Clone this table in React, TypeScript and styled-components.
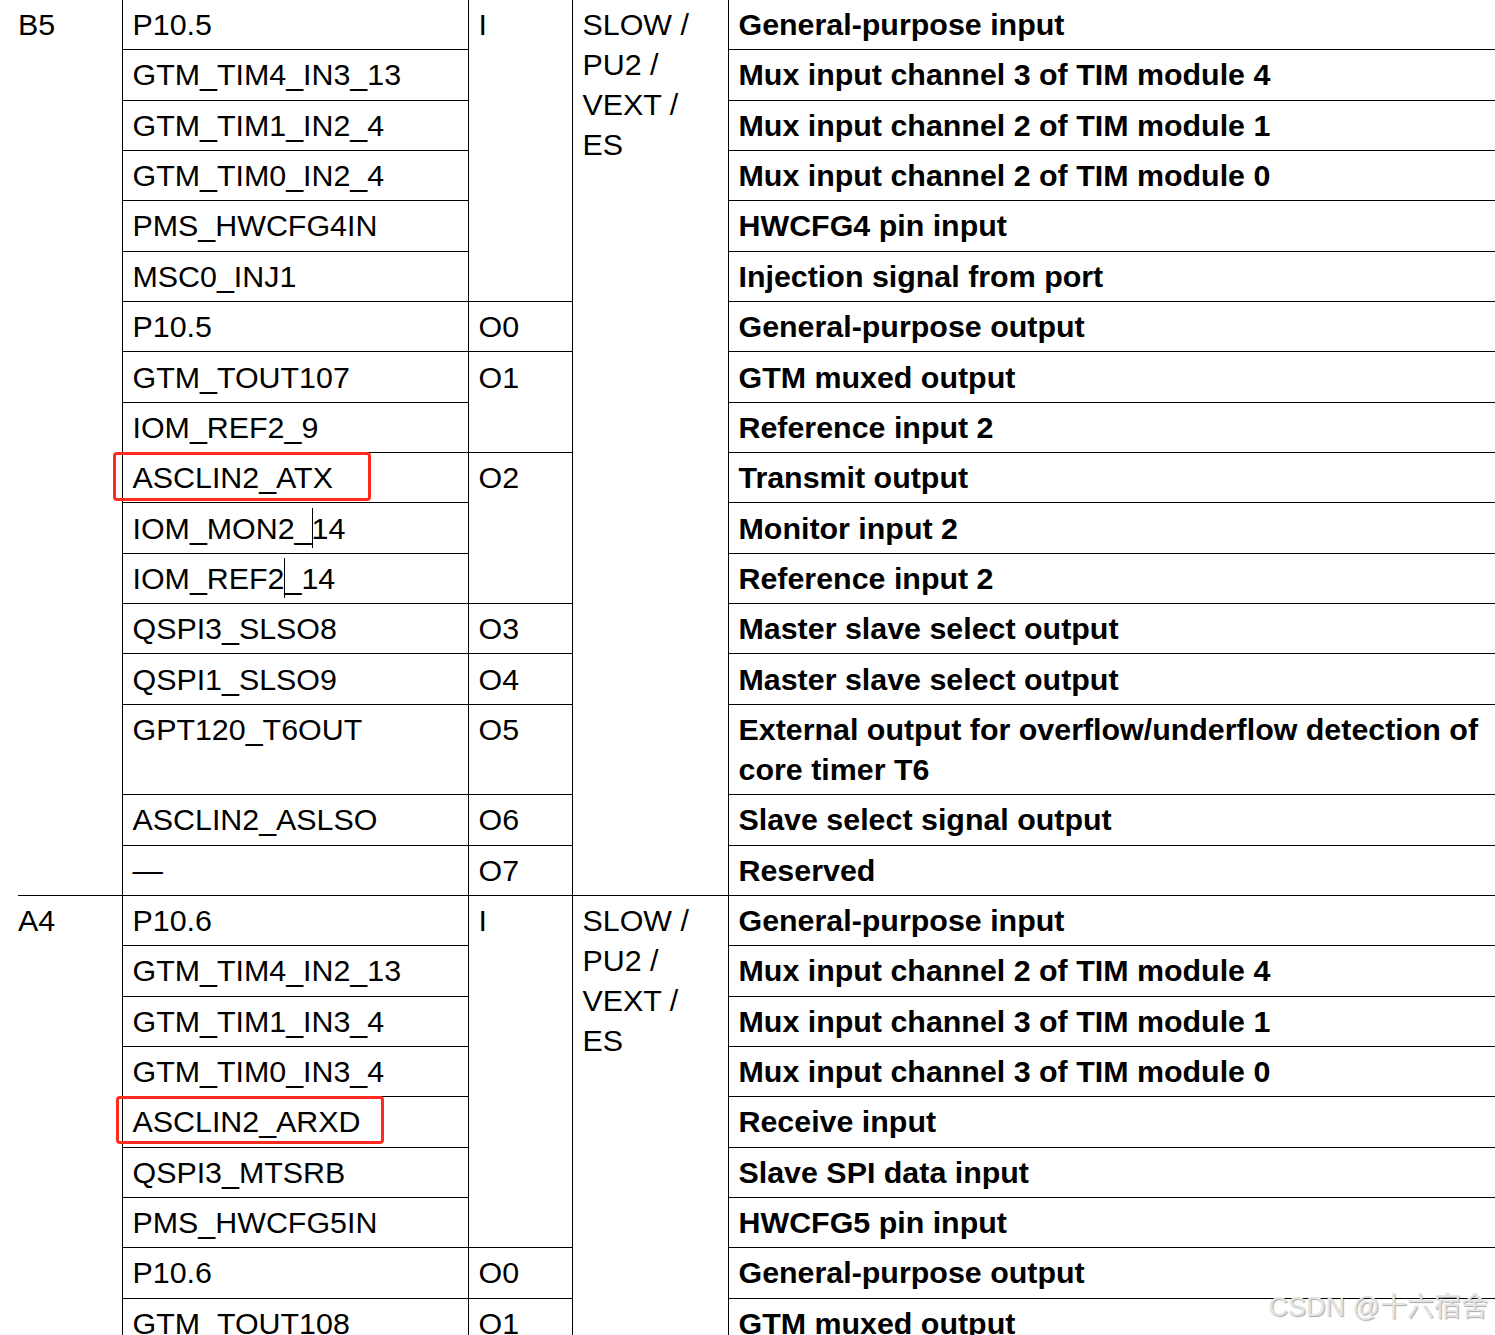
import React from "react";
import styled, { createGlobalStyle } from "styled-components";

const GlobalStyle = createGlobalStyle`
  html, body {
    margin: 0;
    padding: 0;
    background: #fff;
    overflow: hidden;
  }
`;

const Page = styled.div`
  position: relative;
  width: 1495px;
  height: 1335px;
  overflow: hidden;
  font-family: "Liberation Sans", Arial, sans-serif;
  color: #000;
`;

const Table = styled.table`
  margin: 0 0 0 18px;
  width: 1477px;
  table-layout: fixed;
  border-collapse: collapse;
  font-size: 30.4px;
  line-height: 40px;
`;

const Cell = styled.td`
  position: relative;
  vertical-align: top;
  padding: 4.1px 10px 5.26px;
  border-bottom: 1px solid #000;
  border-right: 1px solid #000;
`;

const BallCell = styled(Cell)`
  padding-left: 0;
`;

const DescCell = styled(Cell)`
  font-weight: bold;
  padding-right: 0;
  border-right: none;
`;

const Caret = styled.span`
  display: inline-block;
  width: 0;
  height: 40px;
  margin-right: -1px;
  border-left: 1px solid #000;
  vertical-align: top;
`;

const Mark = styled.span<{ $left: number; $top: number; $w: number; $h: number }>`
  position: absolute;
  left: ${(p) => p.$left}px;
  top: ${(p) => p.$top}px;
  width: ${(p) => p.$w}px;
  height: ${(p) => p.$h}px;
  box-sizing: border-box;
  border: 3px solid #ff2b1f;
  border-radius: 4px;
  pointer-events: none;
`;

const Watermark = styled.div`
  position: absolute;
  right: 7px;
  top: 1290px;
  font-family: "Liberation Sans", "Noto Sans CJK SC", sans-serif;
  font-size: 27px;
  line-height: 34px;
  color: #e4e4e4;
  text-shadow: 1px 1px 1px rgba(0, 0, 0, 0.35);
  white-space: nowrap;
`;

type Signal = {
  name: string;
  desc: string;
  ctrl?: string;
  span?: number;
  caretAt?: number;
  mark?: { left: number; top: number; w: number; h: number };
};

type Group = { ball: string; type: string; signals: Signal[] };

const groups: Group[] = [
  {
    ball: "B5",
    type: "SLOW / PU2 / VEXT / ES",
    signals: [
      { name: "P10.5", ctrl: "I", span: 6, desc: "General-purpose input" },
      { name: "GTM_TIM4_IN3_13", desc: "Mux input channel 3 of TIM module 4" },
      { name: "GTM_TIM1_IN2_4", desc: "Mux input channel 2 of TIM module 1" },
      { name: "GTM_TIM0_IN2_4", desc: "Mux input channel 2 of TIM module 0" },
      { name: "PMS_HWCFG4IN", desc: "HWCFG4 pin input" },
      { name: "MSC0_INJ1", desc: "Injection signal from port" },
      { name: "P10.5", ctrl: "O0", desc: "General-purpose output" },
      { name: "GTM_TOUT107", ctrl: "O1", span: 2, desc: "GTM muxed output" },
      { name: "IOM_REF2_9", desc: "Reference input 2" },
      {
        name: "ASCLIN2_ATX",
        ctrl: "O2",
        span: 3,
        desc: "Transmit output",
        mark: { left: -10, top: -1, w: 258, h: 49 },
      },
      { name: "IOM_MON2_14", caretAt: 9, desc: "Monitor input 2" },
      { name: "IOM_REF2_14", caretAt: 8, desc: "Reference input 2" },
      { name: "QSPI3_SLSO8", ctrl: "O3", desc: "Master slave select output" },
      { name: "QSPI1_SLSO9", ctrl: "O4", desc: "Master slave select output" },
      {
        name: "GPT120_T6OUT",
        ctrl: "O5",
        desc: "External output for overflow/underflow detection of core timer T6",
      },
      { name: "ASCLIN2_ASLSO", ctrl: "O6", desc: "Slave select signal output" },
      { name: "\u2014", ctrl: "O7", desc: "Reserved" },
    ],
  },
  {
    ball: "A4",
    type: "SLOW / PU2 / VEXT / ES",
    signals: [
      { name: "P10.6", ctrl: "I", span: 7, desc: "General-purpose input" },
      { name: "GTM_TIM4_IN2_13", desc: "Mux input channel 2 of TIM module 4" },
      { name: "GTM_TIM1_IN3_4", desc: "Mux input channel 3 of TIM module 1" },
      { name: "GTM_TIM0_IN3_4", desc: "Mux input channel 3 of TIM module 0" },
      {
        name: "ASCLIN2_ARXD",
        desc: "Receive input",
        mark: { left: -7, top: -1, w: 268, h: 48 },
      },
      { name: "QSPI3_MTSRB", desc: "Slave SPI data input" },
      { name: "PMS_HWCFG5IN", desc: "HWCFG5 pin input" },
      { name: "P10.6", ctrl: "O0", desc: "General-purpose output" },
      { name: "GTM_TOUT108", ctrl: "O1", desc: "GTM muxed output" },
    ],
  },
];

const SignalName: React.FC<{ s: Signal }> = ({ s }) =>
  s.caretAt === undefined ? (
    <>{s.name}</>
  ) : (
    <>
      {s.name.slice(0, s.caretAt)}
      <Caret />
      {s.name.slice(s.caretAt)}
    </>
  );

export default function App() {
  return (
    <Page>
      <GlobalStyle />
      <Table>
        <colgroup>
          <col style={{ width: 104 }} />
          <col style={{ width: 346 }} />
          <col style={{ width: 104 }} />
          <col style={{ width: 156 }} />
          <col />
        </colgroup>
        <tbody>
          {groups.map((g) =>
            g.signals.map((s, i) => (
              <tr key={g.ball + i}>
                {i === 0 && <BallCell rowSpan={g.signals.length}>{g.ball}</BallCell>}
                <Cell>
                  <SignalName s={s} />
                  {s.mark && (
                    <Mark $left={s.mark.left} $top={s.mark.top} $w={s.mark.w} $h={s.mark.h} />
                  )}
                </Cell>
                {s.ctrl && <Cell rowSpan={s.span ?? 1}>{s.ctrl}</Cell>}
                {i === 0 && <Cell rowSpan={g.signals.length}>{g.type}</Cell>}
                <DescCell>{s.desc}</DescCell>
              </tr>
            ))
          )}
        </tbody>
      </Table>
      <Watermark>CSDN @十六宿舍</Watermark>
    </Page>
  );
}
